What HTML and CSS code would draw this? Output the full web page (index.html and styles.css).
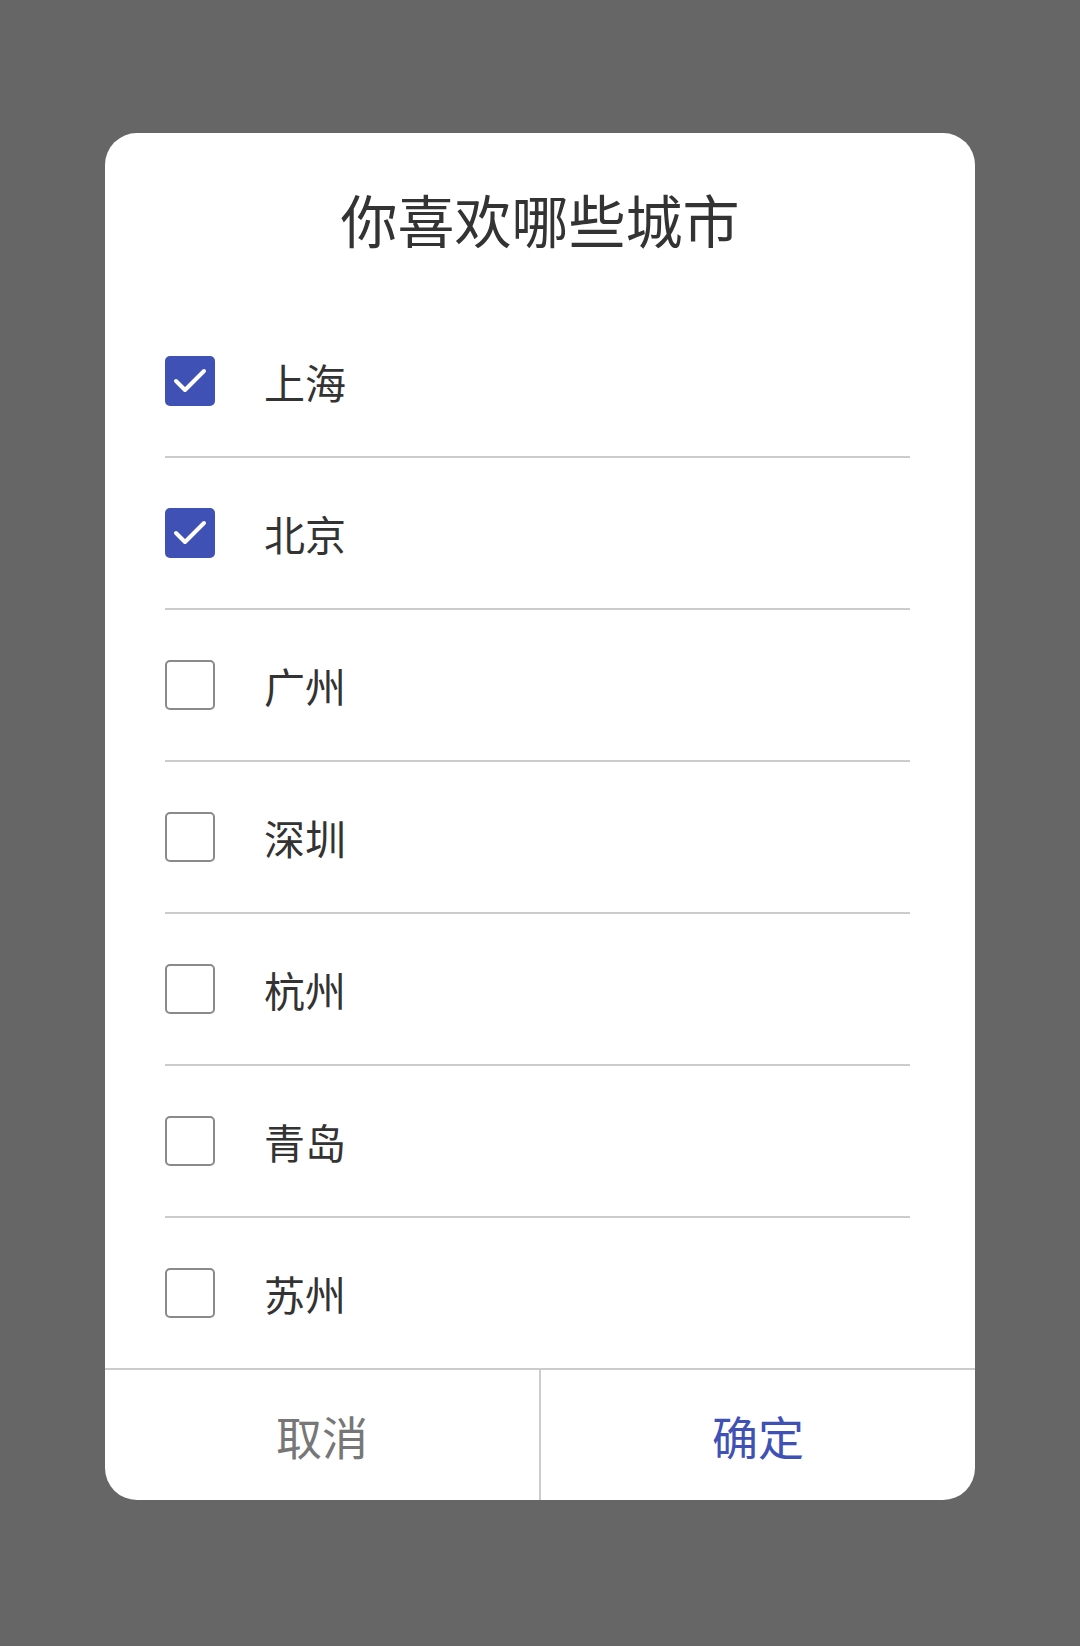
FILE: index.html
```html
<!DOCTYPE html>
<html lang="zh-CN">
<head>
<meta charset="utf-8">
<link rel="stylesheet" href="styles.css">
</head>
<body>
<div class="screen">
  <div class="dialog">
    <div class="title">你喜欢哪些城市</div>
    <ul class="list">
      <li class="row"><span class="box checked"><svg viewBox="0 0 50 50"><polyline points="11,25 20,34 39,15"/></svg></span><span class="label">上海</span></li>
      <li class="row"><span class="box checked"><svg viewBox="0 0 50 50"><polyline points="11,25 20,34 39,15"/></svg></span><span class="label">北京</span></li>
      <li class="row"><span class="box"></span><span class="label">广州</span></li>
      <li class="row"><span class="box"></span><span class="label">深圳</span></li>
      <li class="row"><span class="box"></span><span class="label">杭州</span></li>
      <li class="row"><span class="box"></span><span class="label">青岛</span></li>
      <li class="row last"><span class="box"></span><span class="label">苏州</span></li>
    </ul>
    <div class="footer">
      <div class="btn cancel">取消</div>
      <div class="btn ok">确定</div>
    </div>
  </div>
</div>
</body>
</html>
```
FILE: styles.css
```css
html, body {
  margin: 0;
  padding: 0;
  background: #666666;
}
body {
  font-family: "Noto Sans CJK SC", "Noto Sans", sans-serif;
}
.screen {
  width: 1080px;
  height: 1646px;
  padding-top: 133px;
  box-sizing: border-box;
}
.dialog {
  width: 870px;
  margin-left: 105px;
  background: #ffffff;
  border-radius: 32px;
  overflow: hidden;
}
.title {
  padding-top: 55px;
  height: 118px;
  font-size: 57px;
  line-height: 60px;
  color: #333333;
  text-align: center;
}
.list {
  list-style: none;
  margin: 0;
  padding: 0 65px 0 60px;
}
.row {
  height: 150px;
  border-bottom: 2px solid #cccccc;
  display: flex;
  align-items: center;
  gap: 49px;
}
.row.last {
  border-bottom: none;
  height: 150px;
}
.box {
  width: 50px;
  height: 50px;
  box-sizing: border-box;
  border: 2.5px solid #8a8a8a;
  border-radius: 5px;
  display: flex;
  align-items: center;
  justify-content: center;
  flex: none;
}
.box.checked {
  background: #3f51b5;
  border: none;
}
.box svg {
  width: 50px;
  height: 50px;
}
.box polyline {
  fill: none;
  stroke: #ffffff;
  stroke-width: 4;
  stroke-linecap: round;
  stroke-linejoin: round;
}
.label {
  font-size: 41px;
  line-height: 50px;
  color: #333333;
  margin-top: 0;
}
.footer {
  display: flex;
  border-top: 2px solid #cccccc;
  height: 130px;
}
.btn {
  flex: 1;
  display: flex;
  align-items: center;
  justify-content: center;
  font-size: 46px;
}
.cancel {
  color: #777777;
  border-right: 2px solid #cccccc;
}
.ok {
  color: #3f51b5;
}
```
